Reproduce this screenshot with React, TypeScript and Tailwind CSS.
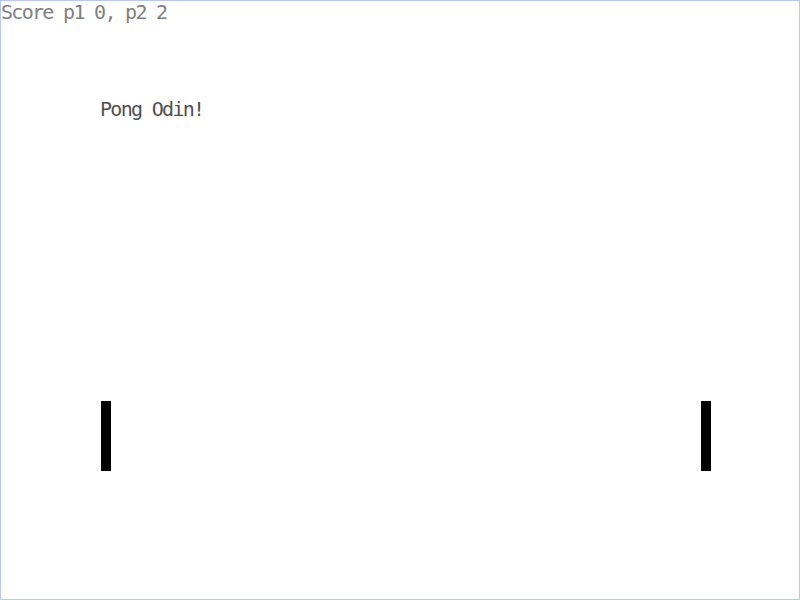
export default function App() {
  return (
    <div className="relative h-[600px] w-[800px] overflow-hidden border border-[#b8c6ff] bg-white font-['DejaVu_Sans_Mono',monospace]">
      {/* HUD */}
      <div className="pt-[1px] text-[20px] leading-[20px] tracking-[-1.7px] text-[#808080]">
        Score p1 0, p2 2
      </div>
      <h1 className="ml-[99px] mt-[77px] text-[20px] leading-[20px] tracking-[-1.7px] text-[#505050]">
        Pong Odin!
      </h1>

      {/* paddles */}
      <div className="absolute left-[100px] top-[400px] h-[70px] w-[10px] bg-black" />
      <div className="absolute left-[700px] top-[400px] h-[70px] w-[10px] bg-black" />
    </div>
  );
}
